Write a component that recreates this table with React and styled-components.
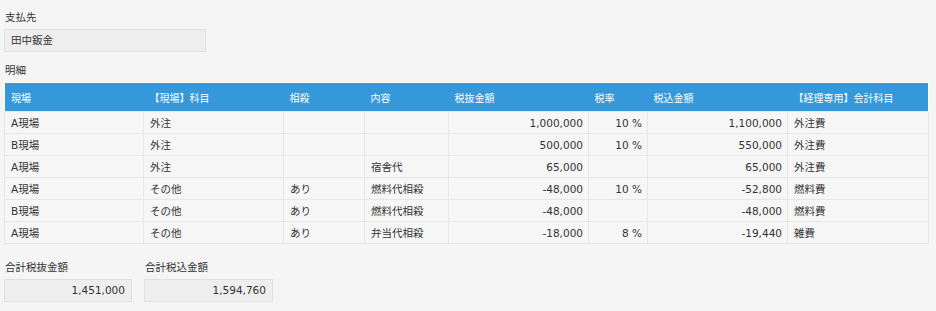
import React from 'react';
import styled, { createGlobalStyle } from 'styled-components';

const Global = createGlobalStyle`
	html, body {
		margin: 0;
		background: #f5f5f5;
	}
	body {
		font-family: "DejaVu Sans", "Noto Sans CJK JP", sans-serif;
		font-size: 10.5px;
		color: #333;
	}
`;

const Page = styled.div`
	padding: 10px 8px 0 4px;
`;

const Label = styled.div`
	line-height: 14px;
	padding-left: 1px;
	margin-bottom: ${(p) => p.gap || 5}px;
	margin-top: ${(p) => p.top || 0}px;
`;

const Box = styled.div`
	box-sizing: border-box;
	width: ${(p) => p.w}px;
	height: 23px;
	border: 1px solid #e0e0e0;
	background: #eeeeee;
	line-height: 21px;
	padding: 0 6px;
	text-align: ${(p) => (p.right ? 'right' : 'left')};
`;

const Table = styled.table`
	border-collapse: collapse;
	table-layout: fixed;
	width: 924px;
	border: 1px solid #fff;
`;

const Th = styled.th`
	background: #3498db;
	color: #fff;
	font-weight: normal;
	font-size: 10px;
	text-align: left;
	height: 28px;
	padding: 0 0 0 6px;
	border: none;
`;

const Td = styled.td`
	height: 21px;
	padding: ${(p) => (p.num ? '0 5px 0 0' : '0 0 0 6px')};
	text-align: ${(p) => (p.num ? 'right' : 'left')};
	border: 1px solid #e6e6e6;
	background: #f6f6f6;
	white-space: nowrap;
`;

const Totals = styled.div`
	display: flex;
	gap: 12px;
	margin-top: 16px;
`;

const widths = [139, 140, 81, 84, 140, 59, 140, 141];
const heads = ['現場', '【現場】科目', '相殺', '内容', '税抜金額', '税率', '税込金額', '【経理専用】会計科目'];
const numCols = [4, 5, 6];

const rows = [
	['A現場', '外注', '', '', '1,000,000', '10 %', '1,100,000', '外注費'],
	['B現場', '外注', '', '', '500,000', '10 %', '550,000', '外注費'],
	['A現場', '外注', '', '宿舎代', '65,000', '', '65,000', '外注費'],
	['A現場', 'その他', 'あり', '燃料代相殺', '-48,000', '10 %', '-52,800', '燃料費'],
	['B現場', 'その他', 'あり', '燃料代相殺', '-48,000', '', '-48,000', '燃料費'],
	['A現場', 'その他', 'あり', '弁当代相殺', '-18,000', '8 %', '-19,440', '雑費']
];

export default function App() {
	return (
		<Page>
			<Global />
			<Label>支払先</Label>
			<Box w={202}>田中鈑金</Box>
			<Label top={11} gap={5}>明細</Label>
			<Table>
				<colgroup>
					{widths.map((w, i) => (
						<col key={i} style={{ width: w }} />
					))}
				</colgroup>
				<thead>
					<tr>
						{heads.map((h, i) => (
							<Th key={i}>{h}</Th>
						))}
					</tr>
				</thead>
				<tbody>
					{rows.map((r, i) => (
						<tr key={i}>
							{r.map((c, j) => (
								<Td key={j} num={numCols.includes(j)}>
									{c}
								</Td>
							))}
						</tr>
					))}
				</tbody>
			</Table>
			<Totals>
				<div>
					<Label>合計税抜金額</Label>
					<Box w={128} right>1,451,000</Box>
				</div>
				<div>
					<Label>合計税込金額</Label>
					<Box w={129} right>1,594,760</Box>
				</div>
			</Totals>
		</Page>
	);
}
